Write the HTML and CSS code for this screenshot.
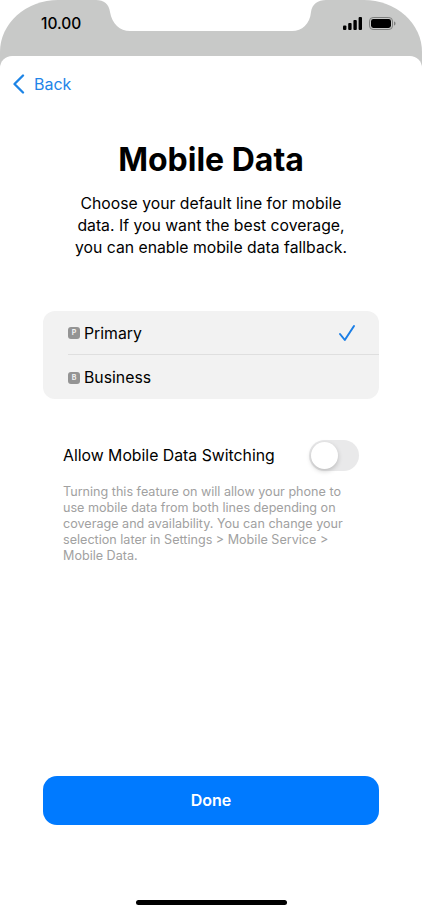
FILE: index.html
```html
<!DOCTYPE html>
<html lang="en">
<head>
  <meta charset="UTF-8">
  <meta name="viewport" content="width=device-width, initial-scale=1.0">
  <title>Mobile Data</title>
  <link rel="stylesheet" href="styles.css">
</head>
<body>
  <div class="phone">
    <!-- notch cut out of the grey status area -->
    <svg class="notch" width="422" height="32" viewBox="0 0 422 32">
      <path d="M96 0C104 0 109 4 110 12C112 24 120 31 130 31L292 31C302 31 310 24 311 12C312 4 318 0 326 0Z" fill="#fff"/>
    </svg>

    <div class="status-bar">
      <span class="time">10.00</span>
      <div class="status-icons">
        <svg width="20" height="13" viewBox="0 0 20 13">
          <rect x="0" y="8.5" width="3.4" height="4.5" rx="1" fill="#000"/>
          <rect x="5.2" y="6" width="3.4" height="7" rx="1" fill="#000"/>
          <rect x="10.4" y="3" width="3.4" height="10" rx="1" fill="#000"/>
          <rect x="15.6" y="0" width="3.4" height="13" rx="1" fill="#000"/>
        </svg>
        <svg width="27" height="13" viewBox="0 0 27 13">
          <rect x="0.5" y="0.5" width="23" height="12" rx="3.6" fill="none" stroke="#7d7e7d"/>
          <rect x="2" y="2" width="20" height="9" rx="2.4" fill="#000"/>
          <path d="M25 4.5C26 4.8 26.5 5.5 26.5 6.5S26 8.2 25 8.5Z" fill="#7d7e7d"/>
        </svg>
      </div>
    </div>

    <div class="sheet">
      <a class="back" href="#">
        <svg width="13" height="20" viewBox="0 0 13 20">
          <path d="M11 1.5L2.5 10L11 18.5" fill="none" stroke="#1c84e6" stroke-width="2.3" stroke-linecap="round" stroke-linejoin="round"/>
        </svg>
        <span>Back</span>
      </a>

      <h1>Mobile Data</h1>
      <p class="intro">Choose your default line for mobile data. If you want the best coverage, you can enable mobile data fallback.</p>

      <div class="lines">
        <div class="line">
          <span class="badge">P</span>
          <span class="line-name">Primary</span>
          <svg class="check" width="18" height="18" viewBox="0 0 18 18">
            <path d="M2 10L6.8 16L16 2" fill="none" stroke="#1c7fe6" stroke-width="2" stroke-linecap="round" stroke-linejoin="round"/>
          </svg>
        </div>
        <div class="line">
          <span class="badge">B</span>
          <span class="line-name">Business</span>
        </div>
      </div>

      <div class="switch-row">
        <span>Allow Mobile Data Switching</span>
        <div class="toggle"><div class="knob"></div></div>
      </div>
      <p class="note">Turning this feature on will allow your phone to use mobile data from both lines depending on coverage and availability. You can change your selection later in Settings &gt; Mobile Service &gt; Mobile Data.</p>

      <button class="done">Done</button>
      <div class="home-bar"></div>
    </div>
  </div>
</body>
</html>
```

FILE: styles.css
```css
body {
  font-family: Inter, "Noto Sans", sans-serif;
  margin: 0;
  background: white;
  color: #000;
}
.phone {
  position: relative;
  width: 422px;
  height: 913px;
  overflow: hidden;
  display: flex;
  flex-direction: column;
  background: #c8c9c8;
  border-radius: 58px 58px 0 0 / 52px 52px 0 0;
}
.notch {
  position: absolute;
  top: 0;
  left: 0;
}
.status-bar {
  height: 56px;
  box-sizing: border-box;
  padding: 15px 26px 0 41px;
  display: flex;
  justify-content: space-between;
  align-items: flex-start;
}
.time {
  font-size: 15.5px;
  line-height: 18px;
  font-weight: 500;
}
.status-icons {
  display: flex;
  align-items: center;
  gap: 6px;
  padding-top: 2px;
}
.sheet {
  flex: 1;
  background: white;
  border-radius: 12px 12px 0 0;
  display: flex;
  flex-direction: column;
}
.back {
  display: flex;
  align-items: center;
  gap: 9px;
  margin: 18px 0 0 12px;
  height: 20px;
  color: #1f85e8;
  font-size: 16px;
  text-decoration: none;
}
h1 {
  margin: 46px 0 0;
  font-size: 32px;
  line-height: 40px;
  font-weight: 700;
  text-align: center;
}
.intro {
  margin: 13px 64px 0;
  font-size: 15.75px;
  line-height: 22px;
  text-align: center;
}
.lines {
  margin: 51.5px 43px 0;
  background: #f2f2f2;
  border-radius: 12px;
  overflow: hidden;
}
.line {
  height: 43px;
  box-sizing: border-box;
  padding: 2px 23px 0 0;
  display: flex;
  align-items: center;
  margin-left: 25px;
  font-size: 15.8px;
}
.line + .line {
  border-top: 1px solid #dfdfdf;
  height: 45px;
}
.badge {
  width: 12px;
  height: 12px;
  border-radius: 3px;
  background: #949494;
  color: #f2f2f2;
  font-size: 7px;
  font-weight: 700;
  line-height: 12px;
  text-align: center;
  margin-right: 4px;
}
.check {
  margin-left: auto;
}
.switch-row {
  margin: 41px 63px 0 63px;
  height: 31px;
  display: flex;
  align-items: center;
  justify-content: space-between;
  font-size: 15.8px;
}
.toggle {
  width: 50px;
  height: 31px;
  border-radius: 16px;
  background: #e9e9ea;
}
.knob {
  width: 27px;
  height: 27px;
  margin: 2px;
  border-radius: 50%;
  background: white;
  box-shadow: 0 2px 5px rgba(0,0,0,0.2);
}
.note {
  margin: 13px 70px 0 63px;
  font-size: 12.6px;
  line-height: 16px;
  color: #a1a1a1;
}
.done {
  margin: auto 43px 0;
  height: 49px;
  padding-bottom: 3px;
  background: #007aff;
  color: white;
  border: none;
  border-radius: 14px;
  font-family: inherit;
  font-size: 16px;
  font-weight: 600;
}
.home-bar {
  width: 151px;
  height: 5px;
  margin: 75px auto 8px;
  border-radius: 3px;
  background: black;
}
```
